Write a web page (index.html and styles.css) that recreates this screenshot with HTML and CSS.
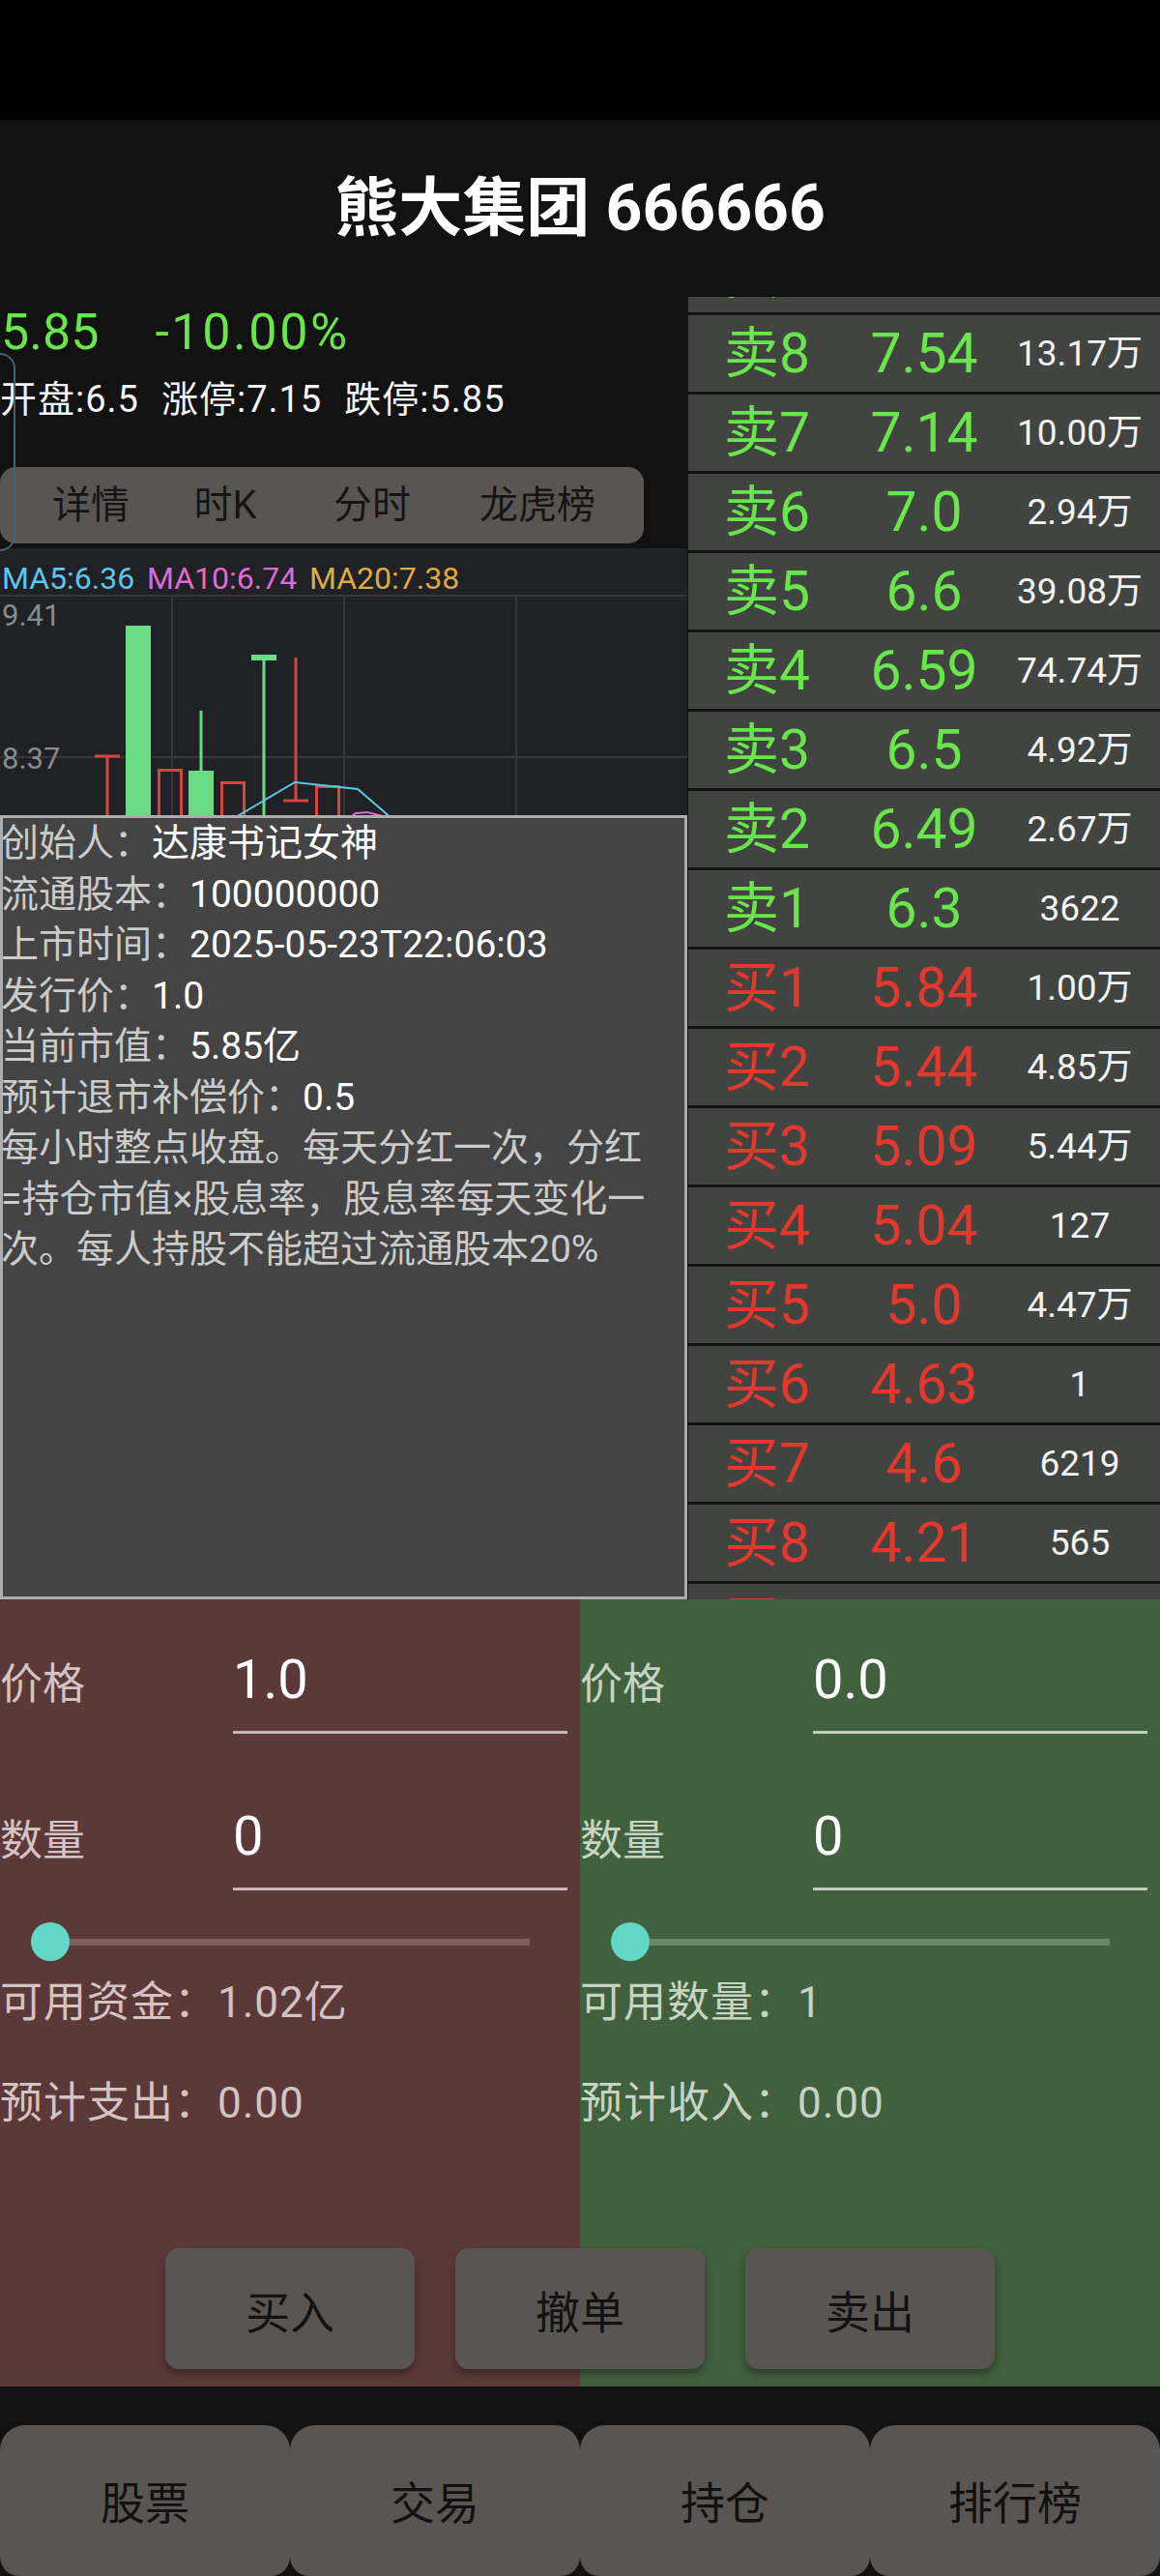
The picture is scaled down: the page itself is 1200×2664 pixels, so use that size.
FILE: index.html
```html
<!DOCTYPE html>
<html lang="zh-CN">
<head>
<meta charset="utf-8">
<title>熊大集团 666666</title>
<link rel="stylesheet" href="styles.css">
</head>
<body>
<div class="app">
  <div class="statusbar"></div>

  <header class="titlebar">
    <h1 class="title">熊大集团 666666</h1>
  </header>

  <main class="market">
    <section class="left">
      <div class="back-outline"></div>

      <div class="quote">
        <div class="price-row"><span class="last">5.85</span><span class="change">-10.00%</span></div>
        <div class="stats-row"><span>开盘:6.5</span><span>涨停:7.15</span><span>跌停:5.85</span></div>
      </div>

      <nav class="tabs">
        <span>详情</span><span>时K</span><span>分时</span><span>龙虎榜</span>
      </nav>

      <div class="chart">
        <svg width="711" height="276" viewBox="0 0 711 276">
          <g stroke="#35373c" stroke-width="2">
            <line x1="0" y1="49" x2="711" y2="49"/>
            <line x1="0" y1="216" x2="711" y2="216"/>
            <line x1="178" y1="49" x2="178" y2="276"/>
            <line x1="356" y1="49" x2="356" y2="276"/>
            <line x1="534" y1="49" x2="534" y2="276"/>
          </g>
          <text class="legend" x="2" y="42"><tspan fill="#5cc6ec">MA5:6.36</tspan><tspan x="152" fill="#df6ad5">MA10:6.74</tspan><tspan x="320" fill="#dfa944">MA20:7.38</tspan></text>
          <text class="axis" x="2" y="80">9.41</text>
          <text class="axis" x="2" y="228">8.37</text>

          <g fill="#6bdc86">
            <rect x="130" y="80" width="26" height="200"/>
            <rect x="195" y="230" width="26" height="50"/>
            <rect x="260" y="110" width="26" height="6"/>
          </g>
          <g stroke="#6bdc86" stroke-width="3">
            <line x1="208" y1="168" x2="208" y2="231"/>
            <line x1="273" y1="114" x2="273" y2="280"/>
          </g>
          <g stroke="#d4453e" stroke-width="3" fill="none">
            <line x1="98" y1="215" x2="124" y2="215"/>
            <line x1="111" y1="215" x2="111" y2="280"/>
            <rect x="164.5" y="229.5" width="23" height="60"/>
            <rect x="229.5" y="242.5" width="23" height="50"/>
            <line x1="306" y1="113" x2="306" y2="261"/>
            <line x1="293" y1="261" x2="319" y2="261"/>
            <rect x="327.5" y="246.5" width="23" height="50"/>
          </g>
          <polyline points="232,285 305,242 370,249 406,280" fill="none" stroke="#5cc6ec" stroke-width="2"/>
          <polyline points="360,280 368,274 380,273 396,277" fill="none" stroke="#df6ad5" stroke-width="2"/>
        </svg>
      </div>

      <div class="info">
        <p><span class="k">创始人：</span><span class="v">达康书记女神</span></p>
        <p><span class="k">流通股本：</span><span class="v">100000000</span></p>
        <p><span class="k">上市时间：</span><span class="v">2025-05-23T22:06:03</span></p>
        <p><span class="k">发行价：</span><span class="v">1.0</span></p>
        <p><span class="k">当前市值：</span><span class="v">5.85亿</span></p>
        <p><span class="k">预计退市补偿价：</span><span class="v">0.5</span></p>
        <p class="desc">每小时整点收盘。每天分红一次，分红=持仓市值×股息率，股息率每天变化一次。每人持股不能超过流通股本20%</p>
      </div>
    </section>

    <section class="book">
      <div class="book-list">
        <div class="level ask"><span class="name">卖9</span><span class="px">7.6</span><span class="vol">2.05万</span></div>
        <div class="level ask"><span class="name">卖8</span><span class="px">7.54</span><span class="vol">13.17万</span></div>
        <div class="level ask"><span class="name">卖7</span><span class="px">7.14</span><span class="vol">10.00万</span></div>
        <div class="level ask"><span class="name">卖6</span><span class="px">7.0</span><span class="vol">2.94万</span></div>
        <div class="level ask"><span class="name">卖5</span><span class="px">6.6</span><span class="vol">39.08万</span></div>
        <div class="level ask"><span class="name">卖4</span><span class="px">6.59</span><span class="vol">74.74万</span></div>
        <div class="level ask"><span class="name">卖3</span><span class="px">6.5</span><span class="vol">4.92万</span></div>
        <div class="level ask"><span class="name">卖2</span><span class="px">6.49</span><span class="vol">2.67万</span></div>
        <div class="level ask"><span class="name">卖1</span><span class="px">6.3</span><span class="vol">3622</span></div>
        <div class="level bid"><span class="name">买1</span><span class="px">5.84</span><span class="vol">1.00万</span></div>
        <div class="level bid"><span class="name">买2</span><span class="px">5.44</span><span class="vol">4.85万</span></div>
        <div class="level bid"><span class="name">买3</span><span class="px">5.09</span><span class="vol">5.44万</span></div>
        <div class="level bid"><span class="name">买4</span><span class="px">5.04</span><span class="vol">127</span></div>
        <div class="level bid"><span class="name">买5</span><span class="px">5.0</span><span class="vol">4.47万</span></div>
        <div class="level bid"><span class="name">买6</span><span class="px">4.63</span><span class="vol">1</span></div>
        <div class="level bid"><span class="name">买7</span><span class="px">4.6</span><span class="vol">6219</span></div>
        <div class="level bid"><span class="name">买8</span><span class="px">4.21</span><span class="vol">565</span></div>
        <div class="level bid"><span class="name">买9</span><span class="px">4.2</span><span class="vol">300</span></div>
      </div>
    </section>
  </main>

  <section class="trade">
    <div class="panel buy">
      <div class="field"><span class="label">价格</span><span class="input">1.0</span></div>
      <div class="field"><span class="label">数量</span><span class="input">0</span></div>
      <div class="slider"><span class="thumb"></span><span class="track"></span></div>
      <div class="line avail">可用资金：1.02亿</div>
      <div class="line estimate">预计支出：0.00</div>
    </div>
    <div class="panel sell">
      <div class="field"><span class="label">价格</span><span class="input">0.0</span></div>
      <div class="field"><span class="label">数量</span><span class="input">0</span></div>
      <div class="slider"><span class="thumb"></span><span class="track"></span></div>
      <div class="line avail">可用数量：1</div>
      <div class="line estimate">预计收入：0.00</div>
    </div>
    <div class="actions">
      <button class="btn">买入</button>
      <button class="btn">撤单</button>
      <button class="btn">卖出</button>
    </div>
  </section>

  <nav class="bottom-nav">
    <span class="nav-item">股票</span>
    <span class="nav-item">交易</span>
    <span class="nav-item">持仓</span>
    <span class="nav-item">排行榜</span>
  </nav>
</div>
</body>
</html>
```

FILE: styles.css
```css
* {
  box-sizing: border-box;
  margin: 0;
  padding: 0;
}

html,
body {
  background: #121212;
}

body {
  width: 1200px;
  height: 2664px;
  overflow: hidden;
  font-family: Roboto, "Noto Sans CJK SC", sans-serif;
  color: #fff;
}

/* top system strip */
.statusbar {
  height: 124px;
  background: #000;
}

.titlebar {
  height: 183px;
  display: flex;
  align-items: center;
  justify-content: center;
}

.title {
  font-size: 66px;
  font-weight: 700;
  line-height: 1;
  color: #fff;
}

/* quote column + order book */
.market {
  display: flex;
  height: 1347px;
}

.left {
  width: 711px;
  flex: none;
  position: relative;
  overflow: hidden;
}

.back-outline {
  position: absolute;
  left: -30px;
  top: 58px;
  width: 46px;
  height: 205px;
  border: 2px solid #3e6476;
  border-radius: 16px;
  z-index: 2;
}

.quote {
  height: 176px;
  padding-top: 7px;
}

.price-row {
  font-size: 52px;
  line-height: 60px;
  color: #69e64b;
  white-space: nowrap;
  padding-left: 1px;
}

.price-row .change {
  margin-left: 58px;
  letter-spacing: 2.6px;
}

.stats-row {
  margin-top: 14px;
  display: flex;
  gap: 23px;
  font-size: 38px;
  line-height: 50px;
  letter-spacing: 1px;
  color: #f4f4f4;
  white-space: nowrap;
}

.tabs {
  width: 666px;
  height: 79px;
  background: #595553;
  border-radius: 16px;
  display: grid;
  grid-template-columns: 188px 90px 214px 128px;
  align-items: center;
  font-size: 40px;
  line-height: 1;
  color: #151515;
  white-space: nowrap;
}

.tabs span {
  text-align: center;
}

.chart {
  margin-top: 5px;
  height: 276px;
  background: #202125;
  overflow: hidden;
}

.chart svg {
  display: block;
}

.legend {
  font-family: Roboto, sans-serif;
  font-size: 32px;
}

.axis {
  font-family: Roboto, sans-serif;
  font-size: 31px;
  fill: #8b8b8b;
}

.info {
  height: 811px;
  background: #444;
  border: 3px solid #adadad;
  padding: 0 33px 0 0;
  font-size: 39px;
  line-height: 52.5px;
  color: #cbcbcb;
}

.info p {
  margin-left: -2px;
}

.info .v {
  color: #fff;
}

/* order book */
.book {
  flex: 1;
  margin-left: 1px;
  overflow: hidden;
}

.book-list {
  margin-top: -63px;
}

.level {
  height: 79px;
  margin-bottom: 3px;
  background: #424442;
  display: grid;
  grid-template-columns: 159px 170px 152px;
  align-items: center;
  line-height: 1;
  white-space: nowrap;
}

.level .name {
  padding-left: 37px;
  font-size: 57px;
}

.level .px {
  text-align: center;
  font-size: 57px;
}

.level .vol {
  text-align: center;
  font-size: 37px;
  color: #f2f2f2;
}

.ask .name,
.ask .px {
  color: #69e64b;
}

.bid .name,
.bid .px {
  color: #e4382c;
}

/* buy / sell forms */
.trade {
  display: grid;
  grid-template-columns: 600px 600px;
  grid-template-rows: 671px 125px 18px;
  height: 814px;
}

.panel {
  grid-row: 1 / 4;
  padding-top: 46px;
}

.panel.buy {
  grid-column: 1;
  background: #5c3939;
  color: #d4c3c3;
}

.panel.sell {
  grid-column: 2;
  background: #41603e;
  color: #c6d4c3;
}

.field {
  display: grid;
  grid-template-columns: 241px 346px;
  height: 93px;
}

.field + .field {
  margin-top: 69px;
}

.field .label {
  font-size: 44px;
  line-height: 84px;
}

.field .input {
  font-size: 56px;
  line-height: 74px;
  color: #fff;
  border-bottom: 3px solid #c9b8b8;
}

.sell .field .input {
  border-bottom-color: #c1cebe;
}

.slider {
  margin-top: 33px;
  height: 40px;
  display: flex;
  align-items: center;
  padding-left: 32px;
}

.thumb {
  width: 40px;
  height: 40px;
  flex: none;
  border-radius: 50%;
  background: #64d8c8;
}

.track {
  width: 476px;
  height: 7px;
  background: #7d605e;
}

.sell .track {
  background: #6a8867;
}

.line {
  font-size: 44px;
  line-height: 52px;
  letter-spacing: 1px;
  white-space: nowrap;
}

.avail {
  margin-top: 17px;
}

.estimate {
  margin-top: 52px;
}

.actions {
  grid-column: 1 / 3;
  grid-row: 2;
  display: flex;
  justify-content: center;
  gap: 42px;
}

.btn {
  width: 258px;
  height: 125px;
  border: none;
  border-radius: 14px;
  background: #595553;
  box-shadow: 0 5px 8px rgba(0, 0, 0, 0.35);
  font-family: Roboto, "Noto Sans CJK SC", sans-serif;
  font-size: 46px;
  color: #121212;
  display: flex;
  align-items: center;
  justify-content: center;
}

/* bottom navigation */
.bottom-nav {
  margin-top: 40px;
  display: grid;
  grid-template-columns: repeat(4, 300px);
  height: 156px;
}

.nav-item {
  background: #595553;
  border-radius: 26px 26px 20px 20px;
  display: flex;
  align-items: center;
  justify-content: center;
  padding-bottom: 2px;
  font-size: 46px;
  color: #111;
}
```
